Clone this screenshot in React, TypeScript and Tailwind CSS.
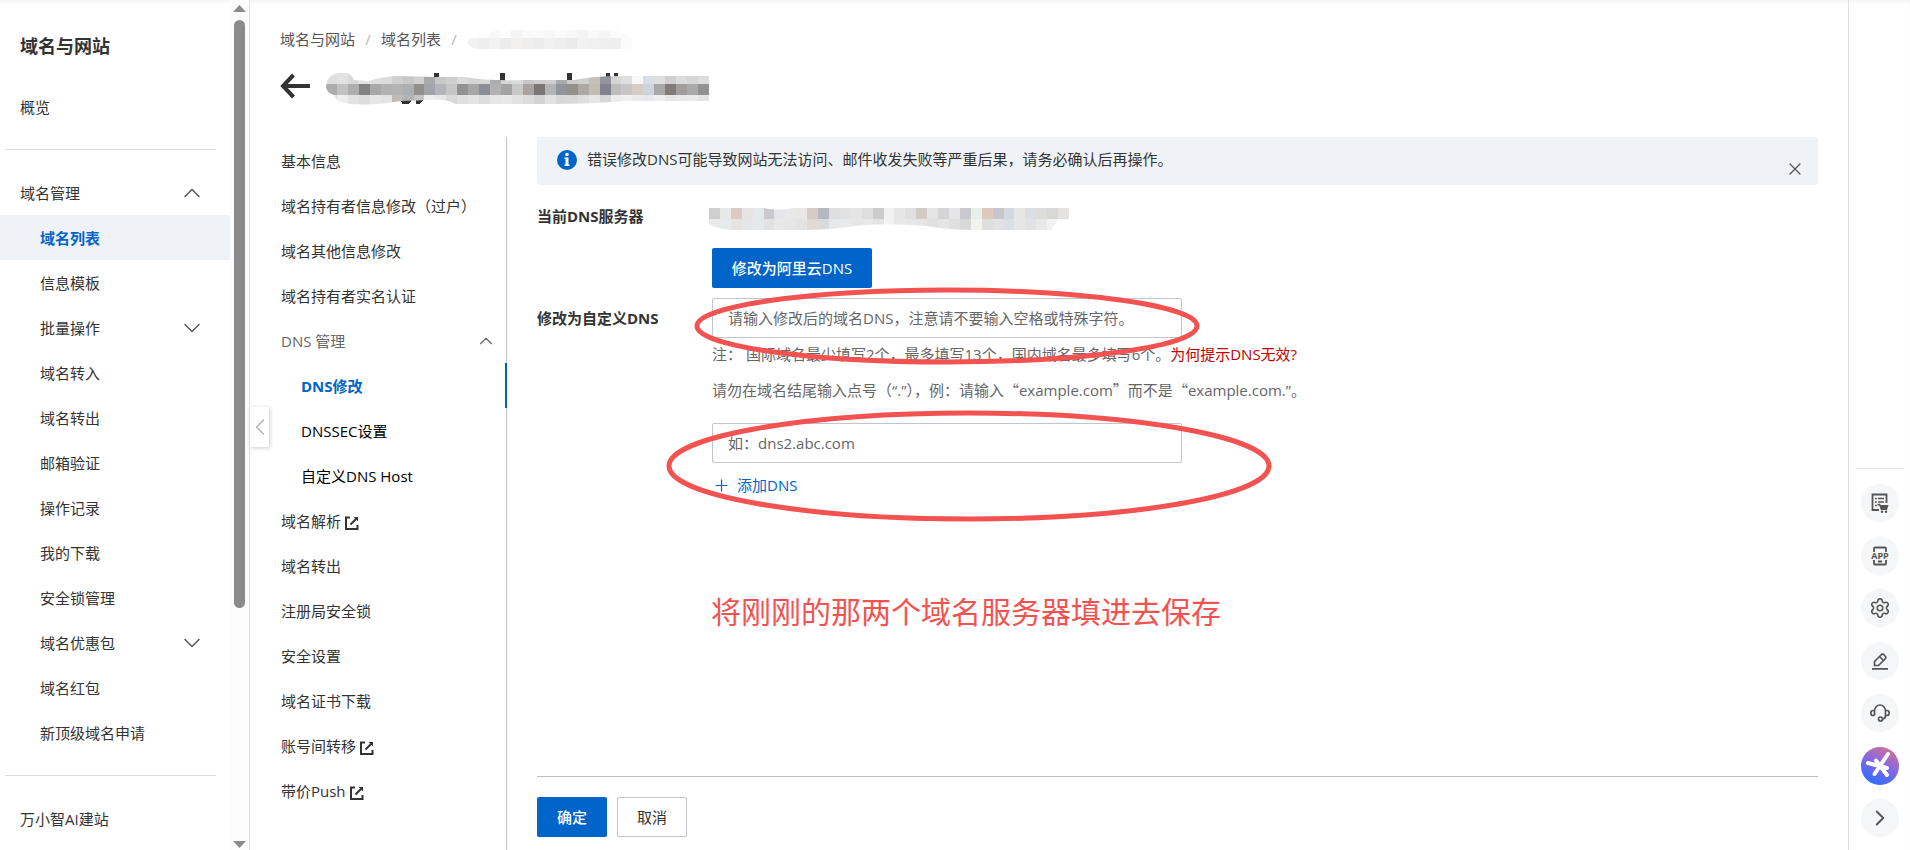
import type { ReactNode } from "react"
import { ChevronDown, ChevronLeft, ChevronRight, ChevronUp, Plus, Settings, X } from "lucide-react"

type SideItem = { label: string; active?: boolean; expandable?: boolean }
type SubItem = { label: string; nested?: boolean; active?: boolean; external?: boolean; group?: boolean }

const sideItems: SideItem[] = [
  { label: "域名列表", active: true },
  { label: "信息模板" },
  { label: "批量操作", expandable: true },
  { label: "域名转入" },
  { label: "域名转出" },
  { label: "邮箱验证" },
  { label: "操作记录" },
  { label: "我的下载" },
  { label: "安全锁管理" },
  { label: "域名优惠包", expandable: true },
  { label: "域名红包" },
  { label: "新顶级域名申请" },
]

const subItems: SubItem[] = [
  { label: "基本信息" },
  { label: "域名持有者信息修改（过户）" },
  { label: "域名其他信息修改" },
  { label: "域名持有者实名认证" },
  { label: "DNS 管理", group: true },
  { label: "DNS修改", nested: true, active: true },
  { label: "DNSSEC设置", nested: true },
  { label: "自定义DNS Host", nested: true },
  { label: "域名解析", external: true },
  { label: "域名转出" },
  { label: "注册局安全锁" },
  { label: "安全设置" },
  { label: "域名证书下载" },
  { label: "账号间转移", external: true },
  { label: "带价Push", external: true },
]

// cell colours of the masked texts, one row per array
const crumbRows = [
  ["#ffffff", "#fbfbfb", "#f8f8f8", "#fdfdfd", "#f5f5f5", "#fafafa", "#fbfbfb", "#f7f7f7", "#fbfbfb", "#f8f8f8", "#f4f4f4", "#f9f9f9", "#f6f6f6", "#fbfbfb", "#fafafa"],
  ["#f0f0f0", "#eeeeee", "#f2f2f2", "#ebebeb", "#f1f0ef", "#eeeeee", "#ececec", "#f1f1f1", "#eeeeee", "#ebebeb", "#f2f2f2", "#f0f0f0", "#efefef", "#eeeeee", "#fbfbfb"],
]
const titleRows = [
  ["#dedede", "#e2e2e2", "#d8d8d8", "#e3e3e3", "#dfdfdf", "#dcdcdc", "#cfcfcf", "#c8c8c8", "#d0d0d0", "#a8a9ad", "#c8c8c8", "#cfcfcf", "#dadada", "#d4d4d4", "#d8d8d8", "#acadb0", "#d5d5d5", "#dadada", "#c6c6c6", "#cfcfcf", "#cfcfcf", "#a9aaae", "#cdcac8", "#cfcfcf", "#c4bfba", "#93949c", "#d6d6d6", "#dedede", "#f8f8f8", "#dadde3", "#dedede", "#d0d0d0", "#dcdcdc", "#d6d6d6", "#dddddd"],
  ["#acacac", "#c2c2c2", "#aeaeae", "#828282", "#a8a8a8", "#b2b2b2", "#b4b4b4", "#adb0b3", "#938f8b", "#a2a4aa", "#b3b5b8", "#c6c6c6", "#929292", "#a6a6a6", "#8b8f95", "#b2b2b2", "#a3a3a3", "#c8c8c8", "#a9a29f", "#7b7674", "#b3b4b6", "#92949b", "#96908b", "#aca9a4", "#c4bbb2", "#80828c", "#bdbdbd", "#c6c6c6", "#d3ccc7", "#ced3dc", "#a8a8a8", "#817c7a", "#a09d9b", "#a9a9a9", "#929292"],
  ["#e4e4e4", "#eeeeee", "#e2e2e2", "#dddddd", "#e7e7e7", "#e3e3e3", "#bdbab7", "#b3b3b3", "#c4c4c4", "#eeeeee", "#e8e8e8", "#d9d9d9", "#e0e0e0", "#e4e4e4", "#dddddd", "#e6e6e6", "#e8e8e8", "#e2e2e2", "#dcdcdc", "#d3d3d3", "#e2e2e2", "#d7d7d7", "#d8d8d8", "#dedede", "#e6e6e6", "#d6d6d6", "#ececec", "#f0f0f0", "#eaeaea", "#e6e8ec", "#efefef", "#e6e6e6", "#e8e8e8", "#eaeaea", "#e4e4e4"],
]
const serverRows = [
  ["#cfcfd0", "#e8e8e8", "#dcc9c3", "#e6e4e2", "#e4e8e8", "#cacacc", "#e3e5e8", "#e8e8e8", "#e9e7e6", "#d8cbc6", "#b7b8bf", "#dedede", "#e0e2e4", "#e7e5e4", "#dedede", "#cccccd", "#f2f2f2", "#e6e6e6", "#e0e0e0", "#d0cbc4", "#e4e4e4", "#d4d4d6", "#e6e6e8", "#c8c9cc", "#e8efe8", "#dcc9bc", "#c6c7cb", "#d4d8de", "#e6e6e6", "#dadde2", "#dcdcda", "#dad8d4", "#e4e3e2"],
  ["#e8eaea", "#e6eaea", "#e6e4e3", "#e4e6e8", "#e5e8e8", "#e2e2e2", "#e8e8e8", "#e6e6e6", "#e5e3e2", "#e2d9d5", "#dadada", "#e6e9ec", "#e9e9e9", "#e6e6e6", "#e8e8e8", "#e4e4e4", "#f2f2f2", "#e8e8e8", "#e6e8e8", "#e8e6e5", "#e0e0e0", "#e5e5e5", "#e0e0e0", "#d9d9da", "#f0f3ee", "#dedede", "#e2e2e2", "#dbdee2", "#e6e6e6", "#e0e2e4", "#e8e8e8", "#f2f2f2", "#fafafa"],
]

function Mosaic({ id, rows, heights, outline, className, children }: {
  id: string
  rows: string[][]
  heights: number[]
  outline: string
  className: string
  children?: ReactNode
}) {
  const total = heights.reduce((sum, h) => sum + h, 0)
  return (
    <svg viewBox={`0 0 ${rows[0].length * 11} ${total}`} preserveAspectRatio="none" className={className} aria-hidden="true" shapeRendering="crispEdges">
      <clipPath id={id}><path d={outline} /></clipPath>
      {children}
      <g clipPath={`url(#${id})`}>
        {rows.map((row, r) => {
          const y = heights.slice(0, r).reduce((sum, h) => sum + h, 0)
          return row.map((color, c) => <rect key={`${r}-${c}`} x={c * 11} y={y} width="11" height={heights[r]} fill={color} />)
        })}
      </g>
    </svg>
  )
}

function ExternalIcon() {
  return (
    <svg viewBox="0 0 14 14" className="mt-1 h-[14px] w-[14px]" fill="none" stroke="#333333" strokeWidth="2" aria-hidden="true">
      <path d="M5 1.5H1V13H12.5V9" />
      <path d="M5.5 8.5 11 3" />
      <path d="M8.5 1H13V5.5Z" fill="#333333" stroke="none" />
    </svg>
  )
}

function BillIcon() {
  return (
    <svg viewBox="0 0 18 20" className="h-5 w-[18px]" fill="none" stroke="#555555" strokeWidth="1.8" aria-hidden="true">
      <path d="M8 17H1.500V1.500H15.500V10" />
      <path d="M4 5.500H5.800M7 5.500H13M4 9H5.800M7 9H13M4 12.500H5.800" strokeWidth="1.500" />
      <path d="M6.500 10.800H9L9.600 12H17.500L16 17H9.800L8.400 12.400H6.500Z" fill="#555555" stroke="none" />
      <circle cx="11" cy="18.700" r="1.200" fill="#555555" stroke="none" />
      <circle cx="15" cy="18.700" r="1.200" fill="#555555" stroke="none" />
    </svg>
  )
}

function AppIcon() {
  return (
    <svg viewBox="0 0 20 20" className="h-5 w-5" fill="none" stroke="#555555" strokeWidth="1.8" aria-hidden="true">
      <path d="M4 6V2.500Q4 1.500 5 1.500H15Q16 1.500 16 2.500V6M4 14V17.500Q4 18.500 5 18.500H15Q16 18.500 16 17.500V14M8 15.500H12" />
      <text x="10" y="13" textAnchor="middle" fontSize="9" fontWeight="700" fill="#555555" stroke="none">APP</text>
    </svg>
  )
}

function EditIcon() {
  return (
    <svg viewBox="0 0 18 18" className="h-[18px] w-[18px]" fill="none" stroke="#555555" strokeWidth="1.7" aria-hidden="true">
      <path d="M3.5 9.5 10.5 2.5Q11.5 1.5 12.5 2.5L14.5 4.5Q15.5 5.5 14.5 6.5L7.5 13.5H3.5Z" />
      <path d="M8.5 4.5 12.5 8.5M1 16.8H17" />
    </svg>
  )
}

function ServiceIcon() {
  return (
    <svg viewBox="0 0 20 20" className="h-5 w-5" fill="none" stroke="#555555" strokeWidth="1.7" aria-hidden="true">
      <path d="M4.500 12.500V8A5.500 6 0 0 1 15.500 8V12.500Q15.500 16 12.500 16" />
      <path d="M4.500 7.500H3Q1 7.500 1 9.500V10.500Q1 12.500 3 12.500H4.500M15.500 7.500H17Q19 7.500 19 9.500V10.500Q19 12.500 17 12.500H15.500" />
      <circle cx="10.500" cy="16" r="2" />
    </svg>
  )
}

function AssistantIcon() {
  return (
    <svg viewBox="0 0 38 38" className="h-[38px] w-[38px]" aria-hidden="true">
      <defs>
        <linearGradient id="assistant" x1="0.8" y1="0" x2="0.35" y2="1">
          <stop offset="0" stopColor="#d9708c" />
          <stop offset="0.45" stopColor="#8a68e0" />
          <stop offset="1" stopColor="#2f6bff" />
        </linearGradient>
      </defs>
      <circle cx="19" cy="19" r="19" fill="url(#assistant)" />
      <g stroke="#ffffff" strokeWidth="4" strokeLinecap="round">
        <path d="M27 7 13.500 27M7 16 26 21M15 13.500 26 28" />
      </g>
    </svg>
  )
}

function RailButton({ label, children }: { label: string; children: ReactNode }) {
  return (
    <button type="button" aria-label={label} className="flex h-[38px] w-[38px] items-center justify-center rounded-full bg-[#f5f6f7] text-[#555555]">
      {children}
    </button>
  )
}

function Sidebar() {
  return (
    <aside className="flex w-[250px] shrink-0 border-r border-[#dedede]">
      <nav className="w-[230px]">
        <h2 className="px-5 pt-8 text-lg leading-7 font-bold">域名与网站</h2>
        <a href="#overview" className="mt-6 flex h-[45px] items-center px-5">概览</a>
        <hr className="mr-[14px] ml-[5px] mt-5 border-[#dedede]" />
        <button type="button" className="mt-5 flex h-[45px] w-full items-center justify-between pr-6 pl-5">
          域名管理
          <ChevronUp size={28} strokeWidth={1.25} color="#555555" />
        </button>
        {sideItems.map((item) => (
          <a
            key={item.label}
            href="#domain"
            className={`flex h-[45px] items-center justify-between pr-6 pl-10 ${item.active ? "bg-[#eff3f8] font-bold text-[#0064c8]" : ""}`}
          >
            {item.label}
            {item.expandable && <ChevronDown size={28} strokeWidth={1.25} color="#555555" />}
          </a>
        ))}
        <hr className="mr-[14px] ml-[5px] mt-5 border-[#dedede]" />
        <a href="#site" className="mt-5 flex h-[45px] items-center px-5">万小智AI建站</a>
      </nav>
      <div className="flex flex-1 flex-col items-center justify-between bg-[#fcfcfc] pt-[5px] pb-[2px]">
        <div className="flex flex-1 flex-col items-center">
          <svg viewBox="0 0 13 7" className="h-[7px] w-[13px]" fill="#8b8b8b" aria-hidden="true"><path d="M6.500 0 13 7H0Z" /></svg>
          <div className="mt-2 h-[588px] w-[11px] rounded-full bg-[#8b8b8b]" />
        </div>
        <svg viewBox="0 0 13 7" className="h-[7px] w-[13px]" fill="#8b8b8b" aria-hidden="true"><path d="M0 0H13L6.500 7Z" /></svg>
      </div>
    </aside>
  )
}

function SubNav() {
  return (
    <nav className="w-[227px] shrink-0 border-r border-[#c0c0c0] pt-[1px]">
      {subItems.map((item) => (
        <a
          key={item.label}
          href="#section"
          className={`flex h-[45px] items-center gap-1 ${item.nested ? "pl-[21px] text-black" : "pl-[1px]"} ${item.group ? "justify-between pr-[9px] text-[#666666]" : ""} ${item.active ? "-mr-px border-r-2 border-[#0064a8] font-bold text-[#0064c8]!" : ""}`}
        >
          {item.label}
          {item.group && <ChevronUp size={22} strokeWidth={1.25} />}
          {item.external && <ExternalIcon />}
        </a>
      ))}
    </nav>
  )
}

function WideQuote({ children }: { children: string }) {
  return <span className="font-['Noto_Sans_CJK_SC',sans-serif]">{children}</span>
}

function DnsForm() {
  return (
    <form className="flex min-w-0 flex-1 flex-col pr-[30px] pl-[30px]">
      <div className="flex h-12 items-start rounded-[3px] bg-[#eff3f8] pr-[13px] pl-5">
        <svg viewBox="0 0 20 20" className="mt-[13px] h-5 w-5" aria-hidden="true">
          <circle cx="10" cy="10" r="10" fill="#0064c8" />
          <circle cx="10" cy="4.500" r="1.800" fill="#ffffff" />
          <path d="M7.500 7.500H11.500V14.500H12.500V16H7.500V14.500H8.500V9H7.500Z" fill="#ffffff" />
        </svg>
        <p className="ml-[10px] flex-1 leading-[44px]">错误修改DNS可能导致网站无法访问、邮件收发失败等严重后果，请务必确认后再操作。</p>
        <button type="button" aria-label="关闭" className="mt-[22px]">
          <X size={20} strokeWidth={1.5} color="#555555" />
        </button>
      </div>

      <div className="grid grid-cols-[175px_1fr] pt-[13px]">
        <div className="leading-9 font-bold">当前DNS服务器</div>
        <div>
          <Mosaic
            id="server-mask"
            rows={serverRows}
            heights={[11, 11]}
            outline="M0 0H55Q70 3 85 0H363V11H352L345 22H270Q240 22 220 18Q170 14 140 19Q120 22 100 22H20Q8 20 0 16Z"
            className="-ml-[3px] mt-[10px] h-[22px] w-[360px]"
          />
          <button type="button" className="mt-[18px] block h-10 w-40 rounded-[2px] bg-[#0064c8] font-medium text-white">修改为阿里云DNS</button>
        </div>
      </div>

      <div className="relative grid grid-cols-[175px_1fr] pt-[10px]">
        <label htmlFor="dns1" className="leading-10 font-bold">修改为自定义DNS</label>
        <div>
          <input
            id="dns1"
            placeholder="请输入修改后的域名DNS，注意请不要输入空格或特殊字符。"
            className="block h-10 w-[470px] rounded-[2px] border border-[#c0c6cc] px-[15px] placeholder:text-[#666666]"
          />
          <p className="leading-8 text-[#666666]">
            注： 国际域名最少填写2个，最多填写13个，国内域名最多填写6个。
            <a href="#help" className="text-[#c00000]">为何提示DNS无效?</a>
          </p>
          <p className="leading-10 text-[#666666]">
            请勿在域名结尾输入点号（“.”），例：请输入
            <WideQuote>“</WideQuote>example.com<WideQuote>”</WideQuote>
            而不是
            <WideQuote>“</WideQuote>example.com.”。
          </p>
          <input
            aria-label="DNS 2"
            placeholder="如：dns2.abc.com"
            className="mt-[13px] block h-10 w-[470px] rounded-[2px] border border-[#c0c6cc] px-[15px] placeholder:text-[#666666]"
          />
          <button type="button" className="mt-1 flex h-9 items-center gap-[6px] text-[#0064c8]">
            <Plus size={19} strokeWidth={1.5} />
            添加DNS
          </button>
        </div>
        {/* hand-drawn marks over the two inputs */}
        <svg viewBox="0 0 620 240" className="pointer-events-none absolute -top-1 left-[128px] h-[240px] w-[620px]" fill="none" stroke="#f25350" strokeWidth="5" aria-hidden="true">
          <ellipse cx="282" cy="42" rx="250" ry="36" />
          <ellipse cx="304" cy="182" rx="300" ry="53" />
        </svg>
      </div>

      <p className="pt-[88px] pl-[174px] text-3xl leading-[42px] text-[#f25350]">将刚刚的那两个域名服务器填进去保存</p>

      <div className="mt-auto flex gap-[10px] border-t border-[#c0c0c0] pt-5 pb-[13px]">
        <button type="submit" className="h-10 w-[70px] rounded-[2px] bg-[#0064c8] font-medium text-white">确定</button>
        <button type="button" className="h-10 w-[70px] rounded-[2px] border border-[#c0c6cc]">取消</button>
      </div>
    </form>
  )
}

function Rail() {
  return (
    <aside className="flex w-[62px] shrink-0 flex-col items-center justify-end border-l border-[#dedede] pb-[13px]">
      <hr className="w-12 border-[#e5e5e5]" />
      <div className="mt-[15px] flex h-[353px] flex-col justify-between">
        <RailButton label="账单"><BillIcon /></RailButton>
        <RailButton label="App"><AppIcon /></RailButton>
        <RailButton label="设置"><Settings size={22} strokeWidth={1.75} /></RailButton>
        <RailButton label="反馈"><EditIcon /></RailButton>
        <RailButton label="客服"><ServiceIcon /></RailButton>
        <RailButton label="助手"><AssistantIcon /></RailButton>
        <RailButton label="展开"><ChevronRight size={26} strokeWidth={1.75} /></RailButton>
      </div>
    </aside>
  )
}

export default function App() {
  return (
    <div className="flex min-h-screen bg-white font-['Open_Sans','Noto_Sans_CJK_SC',sans-serif] text-[15px] leading-6 text-[#333333] shadow-[inset_0_4px_4px_-2px_#f2f2f2]">
      <Sidebar />
      <main className="relative flex min-w-0 flex-1 flex-col pl-[30px]">
        <button type="button" aria-label="收起" className="absolute top-[407px] left-0 flex h-10 w-[19px] items-center justify-center bg-white text-[#b5b5b5] shadow-[1px_1px_4px_#cccccc]">
          <ChevronLeft size={28} strokeWidth={1.25} className="shrink-0" />
        </button>
        <div className="flex items-center pt-[27px] text-[#555555]">
          <a href="#home">域名与网站</a>
          <span className="w-[26px] text-center text-[#b5b5b5]">/</span>
          <a href="#list">域名列表</a>
          <span className="w-[26px] text-center text-[#b5b5b5]">/</span>
          <Mosaic
            id="crumb-mask"
            rows={crumbRows}
            heights={[8, 11]}
            outline="M0 12Q4 5 18 5L30 0H150L165 8V19H10Q2 18 0 12Z"
            className="h-[19px] w-[165px]"
          />
        </div>
        <div className="flex h-[86px] items-start pt-[18px]">
          <button type="button" aria-label="返回" className="mt-[1px]">
            <svg viewBox="0 0 30 32" className="h-8 w-[30px]" fill="none" stroke="#333333" strokeWidth="4" aria-hidden="true">
              <path d="M30 16H3M13.500 5 3 16 13.500 27" />
            </svg>
          </button>
          <Mosaic
            id="title-mask"
            rows={titleRows}
            heights={[11, 11, 10]}
            outline="M0 14Q1 2 12 0H20Q26 1 28 7L42 8Q60 3 75 3L110 4L140 4Q160 8 200 7L250 7Q270 3 295 3H385V28L300 28Q270 31 220 31H130Q122 26 105 27L75 28Q40 34 18 30Q8 27 8 22Q1 20 0 14Z"
            className="ml-4 mt-1 h-8 w-[383px]"
          >
            <path d="M109 0h5v6h-5zM175 0h5v8h-5zM242 0h5v8h-5zM281 0h4v5h-4zM290 0h4v5h-4zM74 26h13l-4 5h-6zM90 26h9l-5 5h-4z" fill="#333333" />
          </Mosaic>
        </div>
        <div className="flex flex-1">
          <SubNav />
          <DnsForm />
        </div>
      </main>
      <Rail />
    </div>
  )
}
